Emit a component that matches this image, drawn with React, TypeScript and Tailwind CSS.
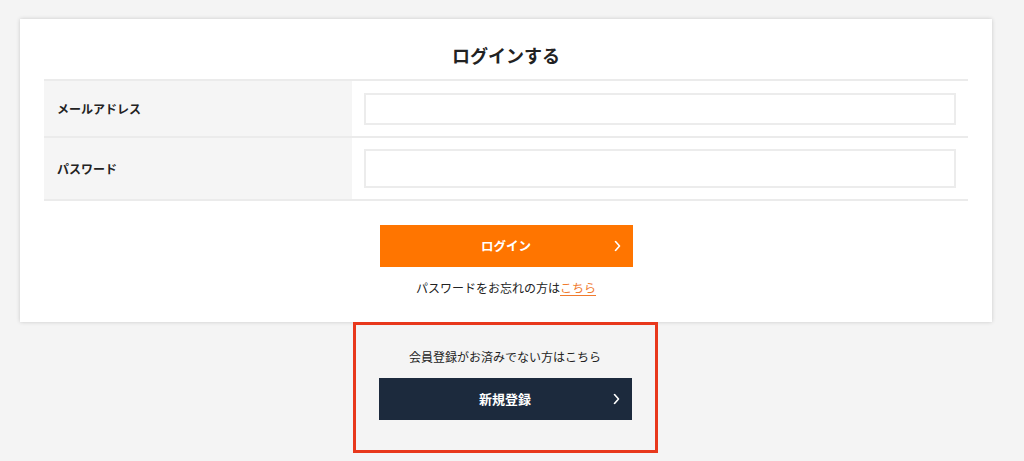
import React from "react";

const Chevron = () => (
  <svg width="7" height="11" viewBox="0 0 7 11" fill="none" className="absolute right-[12px] top-1/2 -translate-y-1/2">
    <path d="M1.5 1 L5.5 5.5 L1.5 10" stroke="white" strokeWidth="1.6" strokeLinecap="round" strokeLinejoin="round" />
  </svg>
);

export default function App() {
  return (
    <div
      className="w-[1024px] h-[461px] bg-[#f4f4f4] overflow-hidden"
      style={{ fontFamily: '"Noto Sans CJK JP", "Noto Sans", sans-serif' }}
    >
      <div className="pt-[19px] pl-[20px] w-[992px]">
        <div className="bg-white shadow-[0_0_4px_rgba(0,0,0,0.18)] px-[24px] pt-[24px] pb-[25px]">
          <h1 className="text-center text-[18px] leading-[24px] font-bold text-[#222] mb-[12px]">ログインする</h1>
          <div className="border-t-2 border-b-2 border-[#ebebeb]">
            <div className="flex border-b-2 border-[#ebebeb]">
              <div className="w-[308px] bg-[#f5f5f5] flex items-center pl-[13px] text-[12px] font-bold text-[#222]">
                メールアドレス
              </div>
              <div className="flex-1 px-[12px] pt-[12px] pb-[11px]">
                <div className="h-[32px] border-2 border-[#ececec] bg-white" />
              </div>
            </div>
            <div className="flex">
              <div className="w-[308px] bg-[#f5f5f5] flex items-center pl-[13px] text-[12px] font-bold text-[#222]">
                パスワード
              </div>
              <div className="flex-1 px-[12px] pt-[11px] pb-[11px]">
                <div className="h-[39px] border-2 border-[#ececec] bg-white" />
              </div>
            </div>
          </div>
          <div className="flex flex-col items-center">
            <button className="relative mt-[24px] w-[253px] h-[42px] bg-[#ff7500] text-white text-[12.5px] font-bold flex items-center justify-center">
              ログイン
              <Chevron />
            </button>
            <p className="mt-[12px] text-[12px] leading-[18px] text-[#222]">
              パスワードをお忘れの方は
              <a className="text-[#f07a2e] underline underline-offset-2">こちら</a>
            </p>
          </div>
        </div>
        <div className="flex justify-center">
          <div className="ml-[-2px] w-[305px] h-[131px] border-[3px] border-[#e8381c] flex flex-col items-center pt-[23px]">
            <p className="text-[12px] leading-[18px] text-[#222]">会員登録がお済みでない方はこちら</p>
            <button className="relative mt-[12px] w-[253px] h-[42px] bg-[#1c2a3d] text-white text-[13px] font-bold flex items-center justify-center">
              新規登録
              <Chevron />
            </button>
          </div>
        </div>
      </div>
    </div>
  );
}
